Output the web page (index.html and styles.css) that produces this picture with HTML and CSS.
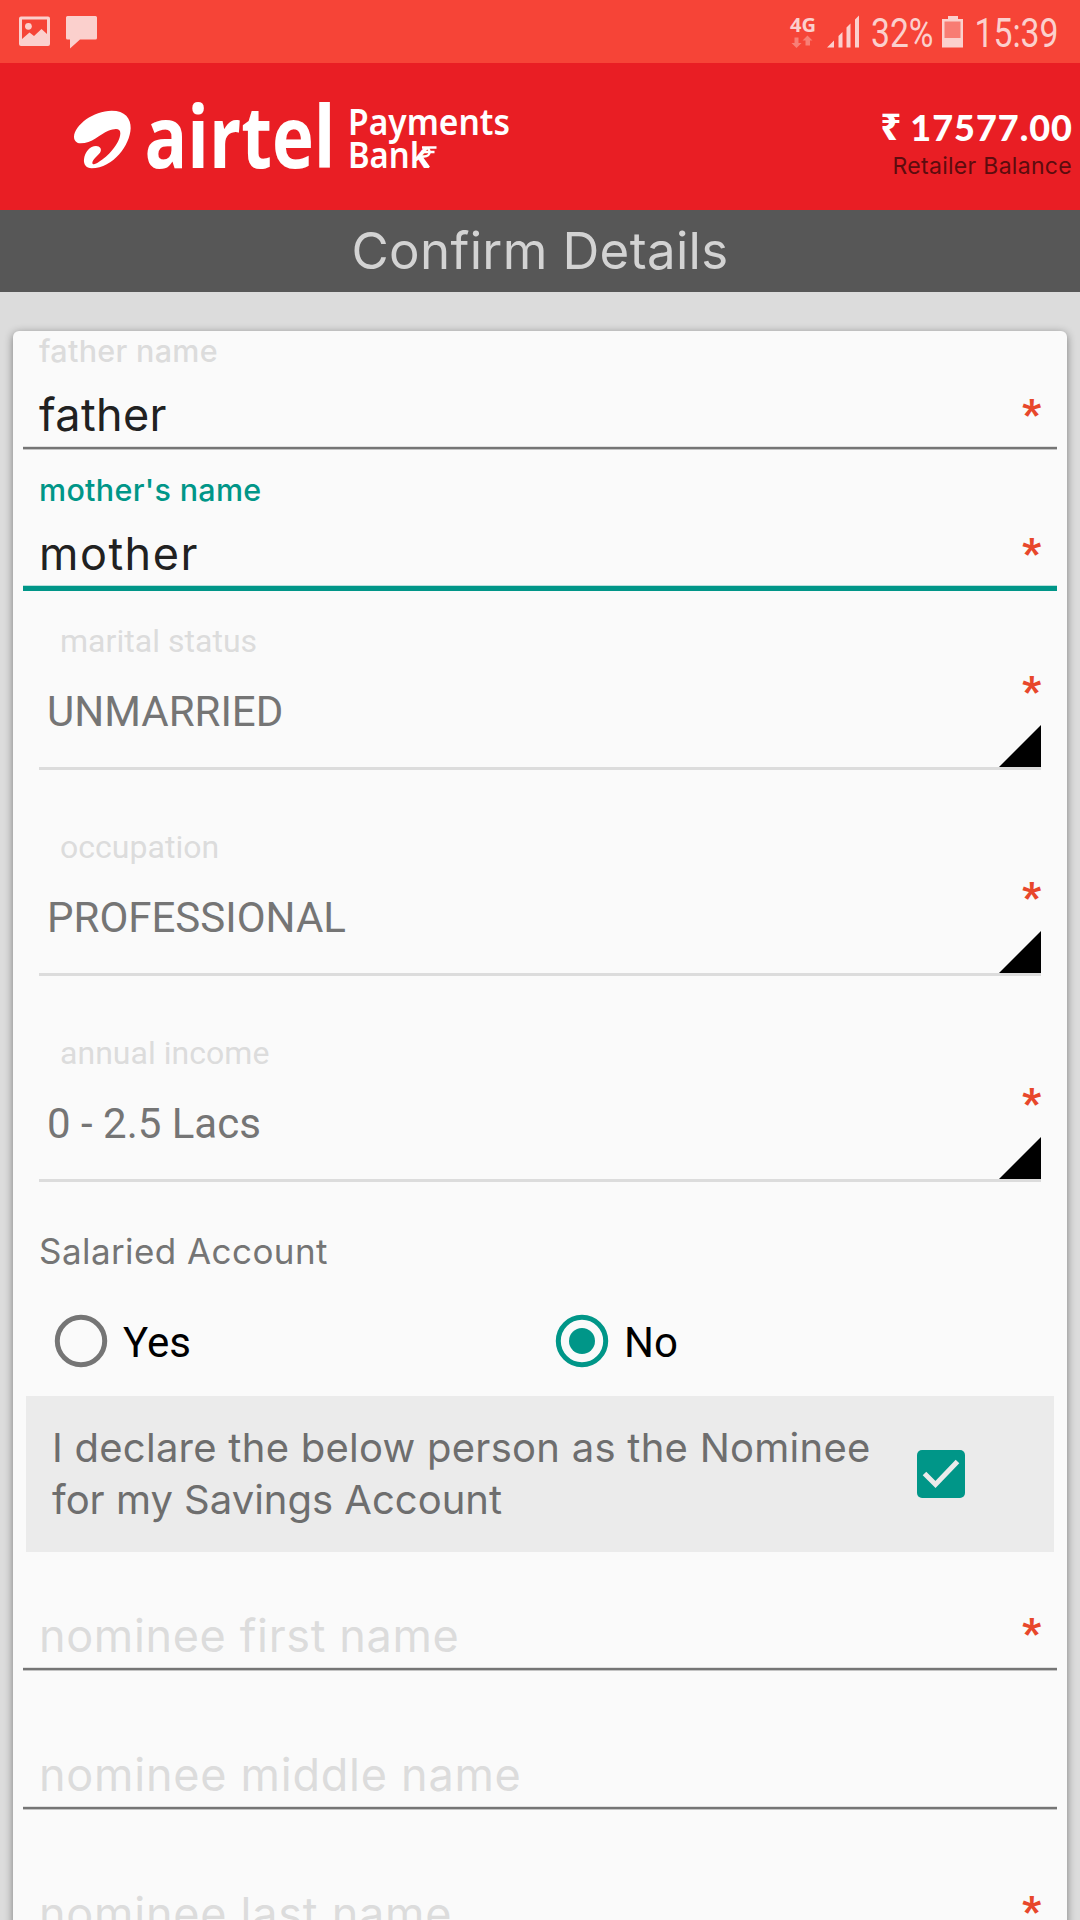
FILE: index.html
```html
<!DOCTYPE html>
<html lang="en">
<head>
<meta charset="utf-8">
<title>Confirm Details</title>
<link rel="stylesheet" href="styles.css">
</head>
<body>
<div class="screen">
  <div class="status">
    <svg class="status-left" width="120" height="63" viewBox="0 0 120 63">
      <path fill-rule="evenodd" d="M21 16.500h27a2 2 0 0 1 2 2V44a2 2 0 0 1-2 2H21a2 2 0 0 1-2-2V18.500a2 2 0 0 1 2-2zM22 19.500V39l7.500-6.500 4.500 3.500 7.500-7 5.500 5V19.500z"/>
      <circle cx="28.400" cy="26.300" r="3.400"/>
      <path d="M67.500 16h28a1.500 1.500 0 0 1 1.500 1.500V38a1.500 1.500 0 0 1-1.500 1.500H80L70 48.500v-9h-2.500A1.500 1.500 0 0 1 66 38V17.500a1.500 1.500 0 0 1 1.500-1.500z"/>
    </svg>
    <svg class="status-right" width="300" height="63" viewBox="780 0 300 63">
      <text class="net" x="790" y="31.500" textLength="26" lengthAdjust="spacingAndGlyphs">4G</text>
      <g opacity=".42">
        <path d="M794.500 37.500h4V43h3l-5 5-5-5h3z"/>
        <path d="M805.500 45.500h4.500V40.500h2.500l-5-5-5 5h3z"/>
      </g>
      <path d="M827 47.500l7-7v7zM838.500 47.500V36l4-4v15.500zM846.500 47.500V27.500l4-4v24zM855 47.500V19.500l4-4v32z"/>
      <text class="digits" x="871" y="47" textLength="62.500" lengthAdjust="spacingAndGlyphs">32%</text>
      <path d="M948 16h10v3h5v28.500H942V19h6z"/>
      <rect class="drain" x="944.500" y="21.500" width="16" height="16.500"/>
      <text class="digits" x="974.500" y="47" textLength="84" lengthAdjust="spacingAndGlyphs">15:39</text>
    </svg>
  </div>

  <header class="header">
    <svg class="logo" width="540" height="147" viewBox="0 63 540 147">
      <path transform="translate(60 90) scale(.33333)" d="M42 140C44 105 100 62 155 62C195 62 213 85 212 115C210 165 160 235 95 235C78 235 70 222 72 208C74 186 90 168 108 168C120 168 127 178 120 188C112 198 98 208 97 218C97 226 108 222 115 217C145 200 180 160 181 130C181 113 165 115 145 122C120 133 95 160 62 160C50 160 42 152 42 140Z"/>
      <text class="brand" x="144.500" y="168" textLength="191" lengthAdjust="spacingAndGlyphs">airtel</text>
      <text class="sub" x="348" y="135" textLength="162" lengthAdjust="spacingAndGlyphs">Payments</text>
      <text class="sub" x="348" y="168" textLength="81" lengthAdjust="spacingAndGlyphs">Bank</text>
      <path class="rupee" d="M422 147.500h14.500M421 152h13.500M424 147.500c7.500 0 7.500 9 0 9h-3l8 11"/>
    </svg>
    <div class="balance">
      <div class="amount"><span class="cur">₹</span><span>17577.00</span></div>
      <div class="caption">Retailer Balance</div>
    </div>
  </header>

  <h1 class="title">Confirm Details</h1>

  <main class="card">
    <div class="field">
      <div class="label">father name</div>
      <div class="input"><span class="value short">father</span><span class="star">*</span></div>
    </div>
    <div class="field active">
      <div class="label">mother's name</div>
      <div class="input"><span class="value">mother</span><span class="star">*</span></div>
    </div>

    <div class="spinner">
      <div class="hint">marital status</div>
      <div class="choice"><span>UNMARRIED</span></div>
      <div class="marks"><span class="star">*</span><svg class="corner" width="42" height="42"><path d="M42 0V42H0z"/></svg></div>
    </div>
    <div class="spinner">
      <div class="hint">occupation</div>
      <div class="choice"><span>PROFESSIONAL</span></div>
      <div class="marks"><span class="star">*</span><svg class="corner" width="42" height="42"><path d="M42 0V42H0z"/></svg></div>
    </div>
    <div class="spinner">
      <div class="hint">annual income</div>
      <div class="choice"><span>0 - 2.5 Lacs</span></div>
      <div class="marks"><span class="star">*</span><svg class="corner" width="42" height="42"><path d="M42 0V42H0z"/></svg></div>
    </div>

    <div class="group">Salaried Account</div>
    <div class="radios">
      <div class="radio">
        <svg width="54" height="54"><circle cx="27" cy="27" r="23.700" fill="none" stroke="#757575" stroke-width="5"/></svg>
        <span>Yes</span>
      </div>
      <div class="radio">
        <svg width="54" height="54"><circle cx="27" cy="27" r="23.700" fill="none" stroke="#009688" stroke-width="5"/><circle cx="27" cy="27" r="13" fill="#009688"/></svg>
        <span>No</span>
      </div>
    </div>

    <div class="declare">
      <p>I declare the below person as the Nominee<br><span class="tight">for my Savings Account</span></p>
      <svg width="48" height="48"><rect width="48" height="48" rx="5" fill="#009688"/><path d="M7.500 23.500L18.500 34.500L40.500 11.500" fill="none" stroke="#ebebeb" stroke-width="5"/></svg>
    </div>

    <div class="field empty">
      <div class="label"></div>
      <div class="input"><span class="value">nominee first name</span><span class="star">*</span></div>
    </div>
    <div class="field empty">
      <div class="label"></div>
      <div class="input"><span class="value wide">nominee middle name</span></div>
    </div>
    <div class="field empty">
      <div class="label"></div>
      <div class="input"><span class="value wide">nominee last name</span><span class="star">*</span></div>
    </div>
  </main>
</div>
</body>
</html>
```
FILE: styles.css
```css
* { box-sizing: border-box; }
body { margin: 0; }
svg { display: block; flex: none; }
.screen {
  width: 1080px;
  height: 1920px;
  overflow: hidden;
  background: #dcdcdc;
  font-family: Inter, "Noto Sans", sans-serif;
  white-space: nowrap;
}

/* status bar */
.status {
  display: flex;
  justify-content: space-between;
  height: 63px;
  background: #f64437;
  fill: #fbd0cd;
}
.net { font: 700 20px "Noto Sans", sans-serif; }
.digits { font: 400 40px Roboto, sans-serif; }
.drain { fill: #f87c73; }

/* brand header */
.header {
  display: flex;
  justify-content: space-between;
  height: 147px;
  background: #e91e24;
}
.logo { fill: #fff; }
.brand { font: 700 86px "Open Sans", sans-serif; }
.sub { font: 600 36px "Noto Sans", sans-serif; }
.rupee { fill: none; stroke: #fff; stroke-width: 2.4; }
.balance { padding: 41px 7px 0 0; text-align: right; color: #fff; }
.amount {
  display: flex;
  justify-content: flex-end;
  gap: 9px;
  height: 46px;
  font: 900 36px/46px Lato, sans-serif;
  letter-spacing: 1px;
}
.cur { font: 800 36px/46px "Noto Sans", sans-serif; letter-spacing: 0; }
.caption {
  padding: 1px 1px 0 0;
  font-size: 23px;
  line-height: 30px;
  letter-spacing: .3px;
  color: #5d0c0e;
}

.title {
  height: 82px;
  margin: 0;
  background: #575757;
  color: #d3d3d3;
  font-size: 51px;
  font-weight: 400;
  line-height: 82px;
  letter-spacing: .35px;
  text-align: center;
}

/* form card */
.card {
  height: 1660px;
  margin: 39px 13px 0;
  background: #fafafa;
  border-radius: 6px;
  box-shadow: 0 2px 8px rgba(0, 0, 0, .45);
}
.field { height: 139px; padding: 0 10px; }
.label {
  height: 40px;
  padding-left: 16px;
  font-size: 30.500px;
  font-weight: 500;
  line-height: 40px;
  letter-spacing: .3px;
  color: #dcdcdc;
}
.input {
  display: flex;
  justify-content: space-between;
  height: 79px;
  padding: 13px 16px 0;
  line-height: 62px;
  background: linear-gradient(#e0e0e0 0 1px, #757575 1px 3px, #c4c4c4 3px) bottom / 100% 4px no-repeat;
}
.value { font-size: 45px; letter-spacing: .65px; color: #212121; }
.value.short { letter-spacing: .35px; }
.empty .value { color: #dcdcdc; }
.empty .value.wide { letter-spacing: .75px; }
.active .label { color: #009688; }
.active .value { letter-spacing: 1.5px; }
.active .input {
  height: 81px;
  background: linear-gradient(#b8e0dc 0 1px, #009688 1px) bottom / 100% 6px no-repeat;
}
.star {
  font-family: Roboto, sans-serif;
  font-size: 41px;
  font-weight: 900;
  line-height: 60px;
  color: #e8472b;
}
.empty .star { line-height: 57px; }

.spinner {
  display: grid;
  grid-template: 38px 107px / 1fr 60px;
  height: 161px;
  margin: 0 26px 45px;
  padding-top: 13px;
  border-bottom: 3px solid #dcdcdc;
  font-family: Roboto, sans-serif;
}
.hint { padding-left: 21px; font-size: 32px; line-height: 38px; letter-spacing: .03px; color: #dcdcdc; }
.choice { grid-row: 2; padding: 27px 0 0 8px; font-size: 42px; line-height: 50px; color: #757575; }
.marks {
  grid-area: 1 / 2 / 3 / 3;
  display: flex;
  flex-direction: column;
  justify-content: space-between;
  align-items: flex-end;
  padding-top: 39px;
}

.group {
  height: 46px;
  padding: 2px 26px 0;
  font-size: 35px;
  line-height: 44px;
  letter-spacing: .43px;
  color: #757575;
}
.radios {
  display: grid;
  grid-template-columns: 501px 1fr;
  height: 54px;
  margin: 41px 0 28px 41px;
  font: 42px/57px Roboto, sans-serif;
  color: #000;
}
.radio { display: flex; gap: 15px; }

.declare {
  display: flex;
  justify-content: space-between;
  align-items: center;
  height: 156px;
  margin: 0 13px;
  padding: 0 89px 0 26px;
  background: #ebebeb;
}
.declare p { margin: 0; font-size: 40px; line-height: 52px; letter-spacing: .26px; color: #6e6e6e; }
.tight { letter-spacing: 0; }
```
